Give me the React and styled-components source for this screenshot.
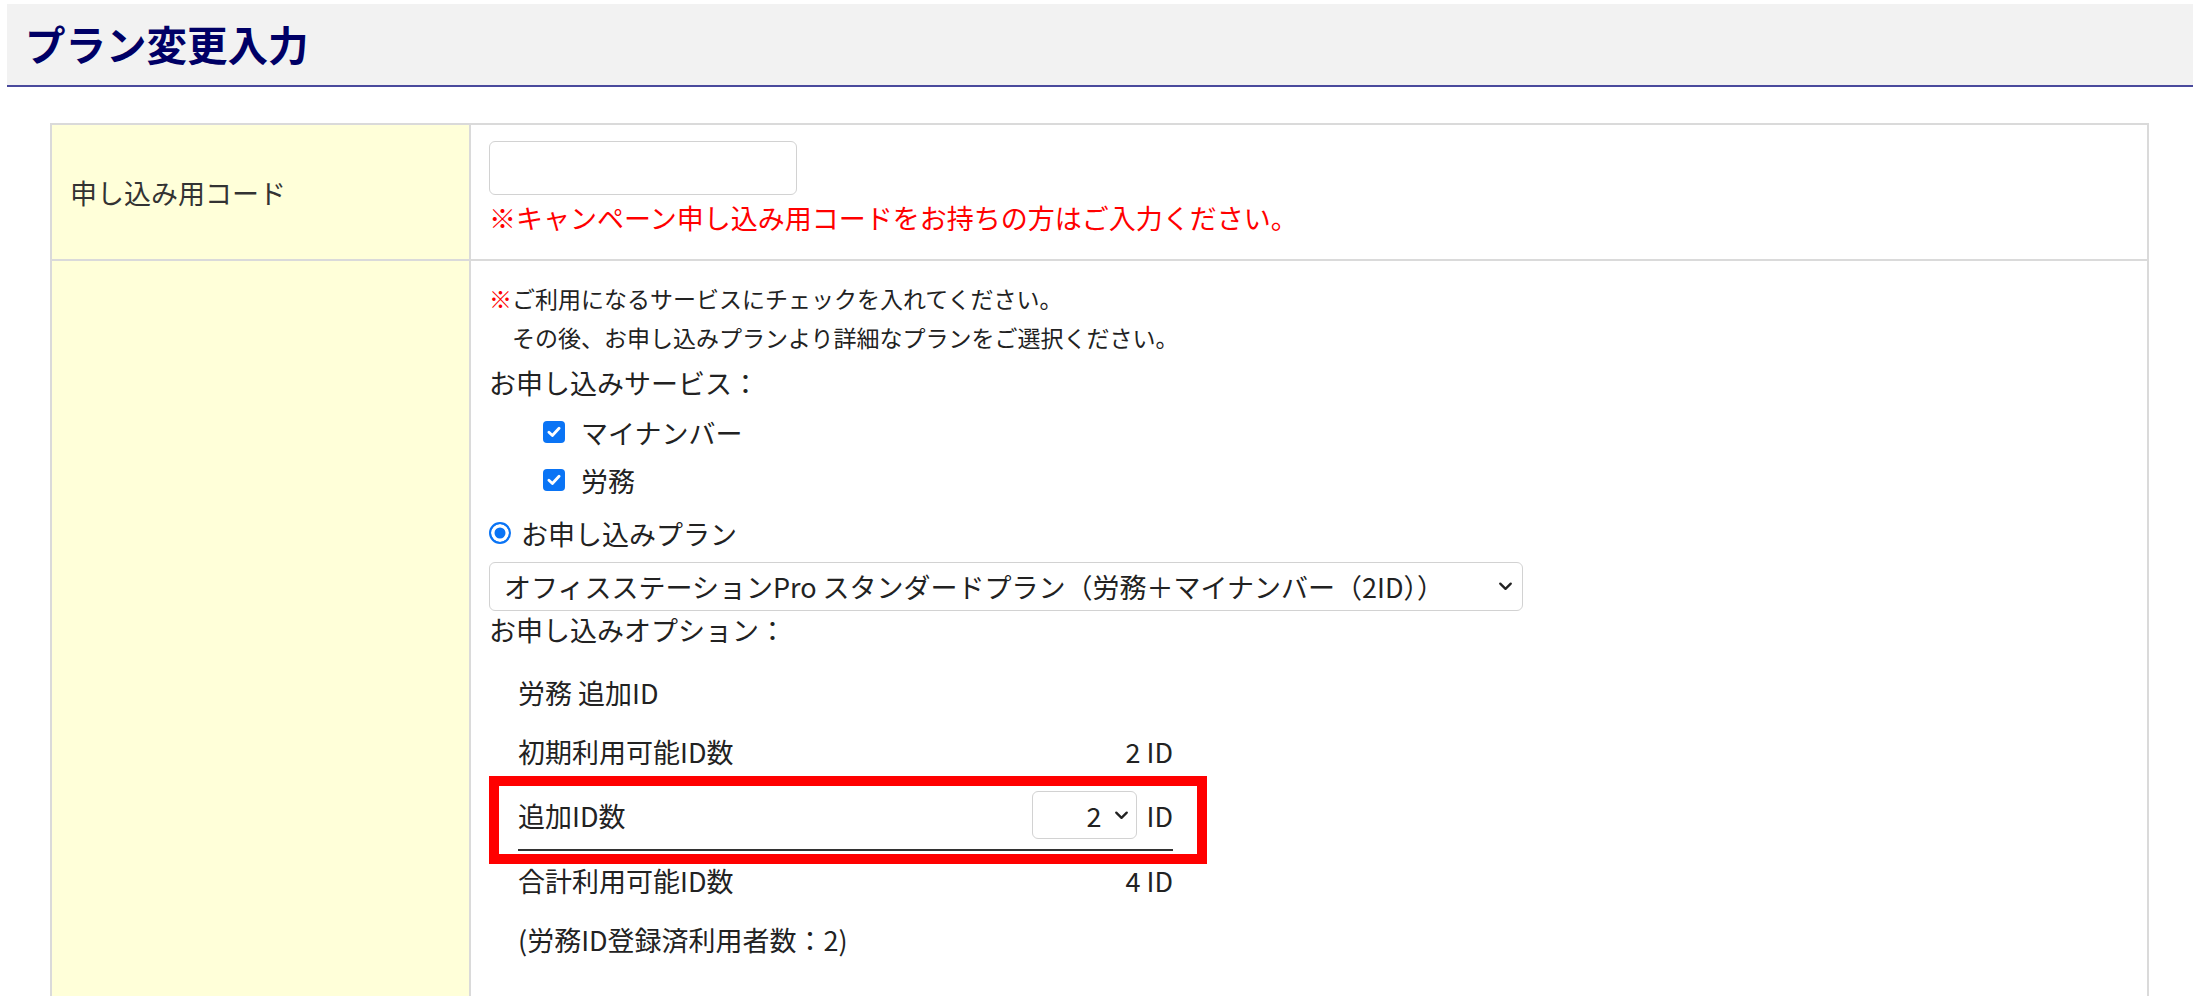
import React from 'react';
import styled, { createGlobalStyle } from 'styled-components';

const GlobalStyle = createGlobalStyle`
  body {
    margin: 0;
    background: #fff;
    color: #222;
    font-family: "Noto Sans CJK JP", "Noto Sans", sans-serif;
  }
`;

const Chevron = ({ size = 15 }) => (
  <svg width={size} height={size * 0.7} viewBox="0 0 14 10" fill="none">
    <polyline points="2,2.5 7,7.5 12,2.5" stroke="#222" strokeWidth="2.2" strokeLinecap="round" strokeLinejoin="round" />
  </svg>
);

const Check = () => (
  <svg width="14" height="12" viewBox="0 0 13 11" fill="none">
    <polyline points="1.8,5.8 5,8.8 11.2,2" stroke="#fff" strokeWidth="2.6" strokeLinecap="round" strokeLinejoin="round" />
  </svg>
);

const options = [
  { label: '労務 追加ID' },
  { label: '初期利用可能ID数', value: '2 ID' },
  { label: '追加ID数', select: '2', highlight: true },
  { label: '合計利用可能ID数', value: '4 ID' },
  { label: '(労務ID登録済利用者数：2)' },
];

const App = () => {
  return (
    <Page>
      <GlobalStyle />
      <PageHeader>
        <Title>プラン変更入力</Title>
      </PageHeader>

      <FormTable>
        <FormRow>
          <LabelCell>申し込み用コード</LabelCell>
          <ValueCell>
            <CodeInput type="text" />
            <Warning>※キャンペーン申し込み用コードをお持ちの方はご入力ください。</Warning>
          </ValueCell>
        </FormRow>

        <FormRow>
          <LabelCell />
          <ValueCell $tall>
            <Note><Mark>※</Mark>ご利用になるサービスにチェックを入れてください。</Note>
            <Note>　その後、お申し込みプランより詳細なプランをご選択ください。</Note>
            <SectionLabel>お申し込みサービス：</SectionLabel>
            <CheckRow>
              <CheckBox><Check /></CheckBox>
              マイナンバー
            </CheckRow>
            <CheckRow>
              <CheckBox><Check /></CheckBox>
              労務
            </CheckRow>
            <RadioRow>
              <Radio />
              お申し込みプラン
            </RadioRow>
            <PlanSelect>
              <span>オフィスステーションPro スタンダードプラン（労務＋マイナンバー（2ID））</span>
              <Chevron />
            </PlanSelect>
            <SectionLabel $short>お申し込みオプション：</SectionLabel>

            <OptionList>
              {options.map((o) => (
                <OptionRow key={o.label} $highlight={o.highlight}>
                  <span>{o.label}</span>
                  {o.value && <span>{o.value}</span>}
                  {o.select && (
                    <CountField>
                      <CountSelect>
                        <span>{o.select}</span>
                        <Chevron />
                      </CountSelect>
                      ID
                    </CountField>
                  )}
                  {o.highlight && <Callout />}
                </OptionRow>
              ))}
            </OptionList>
          </ValueCell>
        </FormRow>
      </FormTable>
    </Page>
  );
};

export default App;

const Page = styled.div`
  padding: 4px 7px 0;
`;

const PageHeader = styled.div`
  display: flex;
  align-items: center;
  height: 81px;
  padding-left: 18px;
  background: #f2f2f2;
  border-bottom: 2px solid #4a4a9c;
`;

const Title = styled.h1`
  margin: 0;
  font-size: 40.5px;
  font-weight: 700;
  line-height: 1;
  color: #000066;
`;

const FormTable = styled.div`
  margin: 36px 44px 0 43px;
  border: 2px solid #dadada;
  border-bottom: none;
`;

const FormRow = styled.div`
  display: grid;
  grid-template-columns: 419px 1fr;
  border-bottom: 2px solid #dadada;
`;

const LabelCell = styled.div`
  display: flex;
  align-items: center;
  padding-left: 18px;
  background: #ffffd9;
  border-right: 2px solid #dadada;
  font-size: 27px;
  color: #333;
`;

const ValueCell = styled.div`
  padding: ${(p) => (p.$tall ? '18px 19px 60px 18px' : '16px 19px 18px 18px')};
  font-size: 27px;
`;

const CodeInput = styled.input`
  display: block;
  box-sizing: border-box;
  width: 308px;
  height: 54px;
  margin: 0;
  border: 1.5px solid #d2d2d2;
  border-radius: 6px;
  background: #fff;
  outline: none;
`;

const Warning = styled.div`
  line-height: 46px;
  color: #ff0000;
`;

const Note = styled.div`
  font-size: 23px;
  line-height: 39px;
  white-space: pre;
`;

const Mark = styled.span`
  color: #ff0000;
`;

const SectionLabel = styled.div`
  line-height: ${(p) => (p.$short ? '38px' : '51px')};
`;

const CheckRow = styled.div`
  display: flex;
  align-items: center;
  gap: 16px;
  height: 48px;
  padding-left: 54px;
`;

const CheckBox = styled.span`
  display: flex;
  align-items: center;
  justify-content: center;
  width: 22px;
  height: 22px;
  border-radius: 4px;
  background: #0a74f5;
`;

const RadioRow = styled.div`
  display: flex;
  align-items: center;
  gap: 10px;
  height: 58px;
`;

const Radio = styled.span`
  box-sizing: border-box;
  width: 22px;
  height: 22px;
  border-radius: 50%;
  border: 2.5px solid #0a74f5;
  background: #0a74f5;
  box-shadow: inset 0 0 0 3.5px #fff;
`;

const PlanSelect = styled.div`
  box-sizing: border-box;
  display: flex;
  align-items: center;
  justify-content: space-between;
  width: 1034px;
  height: 49px;
  padding: 0 9px 0 14px;
  border: 1.5px solid #d2d2d2;
  border-radius: 6px;
  white-space: nowrap;
`;

const OptionList = styled.div`
  width: 655px;
  margin: 14px 0 0 29px;
`;

const OptionRow = styled.div`
  position: relative;
  display: flex;
  align-items: center;
  justify-content: space-between;
  height: ${(p) => (p.$highlight ? '68px' : '59px')};
  border-bottom: ${(p) => (p.$highlight ? '2px solid #333' : 'none')};
`;

const CountField = styled.div`
  display: flex;
  align-items: center;
  gap: 10px;
`;

const CountSelect = styled.div`
  box-sizing: border-box;
  display: flex;
  align-items: center;
  justify-content: flex-end;
  gap: 12px;
  width: 105px;
  height: 48px;
  padding-right: 7px;
  border: 1.5px solid #d2d2d2;
  border-radius: 6px;
`;

const Callout = styled.div`
  position: absolute;
  top: -5px;
  right: -34px;
  bottom: -15px;
  left: -29px;
  border: 10px solid #ff0000;
  pointer-events: none;
`;
